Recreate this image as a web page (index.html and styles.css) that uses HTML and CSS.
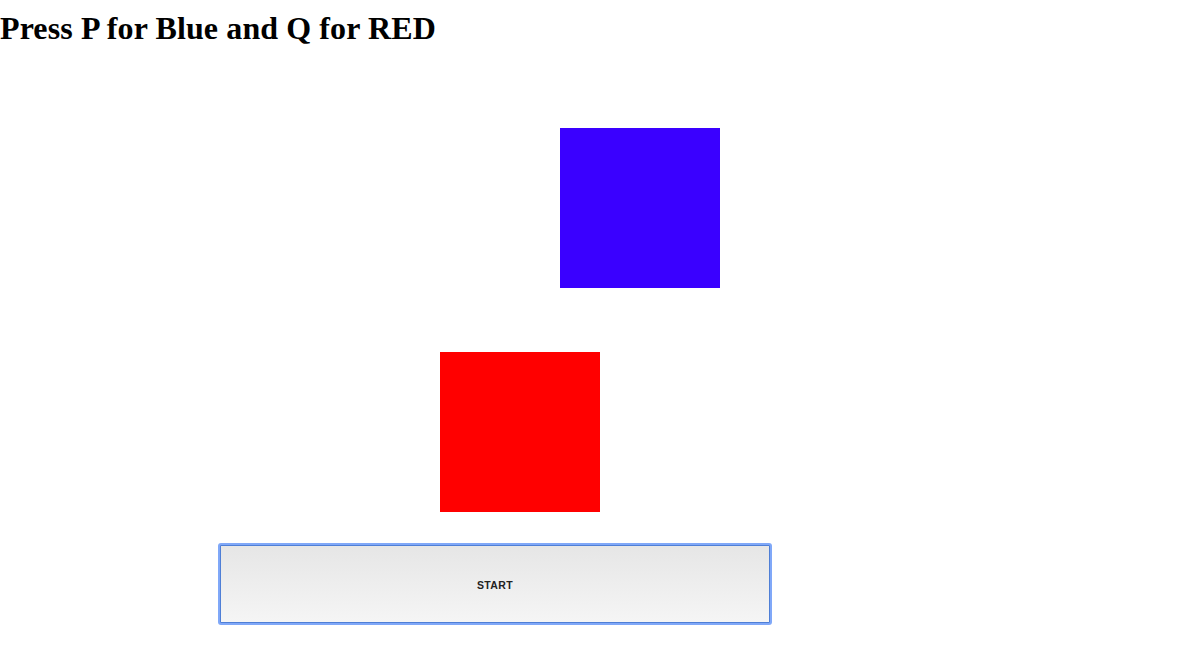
FILE: index.html
```html
<!DOCTYPE html>
<html>
<head>
<meta charset="utf-8">
<link rel="stylesheet" href="styles.css">
</head>
<body>
<h1 class="title">Press P for Blue and Q for RED</h1>
<div class="stage">
  <div class="square blue"></div>
  <div class="square red"></div>
  <div class="ring">
    <button class="start">START</button>
  </div>
</div>
</body>
</html>
```
FILE: styles.css
```css
html, body {
  margin: 0;
  padding: 0;
  background: #ffffff;
}
.title {
  margin: 0;
  padding-top: 10px;
  font-family: "Liberation Serif", "Times New Roman", serif;
  font-size: 32px;
  font-weight: bold;
  line-height: 37px;
  letter-spacing: 0.1px;
  color: #000;
}
.stage {
  display: flex;
  flex-direction: column;
  align-items: flex-start;
}
.square {
  width: 160px;
  height: 160px;
}
.blue {
  background: #3a00ff;
  margin-top: 81px;
  margin-left: 560px;
}
.red {
  background: #ff0000;
  margin-top: 64px;
  margin-left: 440px;
}
.ring {
  margin-top: 31px;
  margin-left: 218px;
  padding: 2px;
  border-radius: 3px;
  background: #80a8f8;
  display: flex;
}
.start {
  -webkit-appearance: none;
  appearance: none;
  display: block;
  margin: 0;
  width: 550px;
  height: 78px;
  box-sizing: border-box;
  border: 1px solid #4f7fd6;
  border-radius: 1px;
  outline: none;
  background: linear-gradient(#e6e6e6, #f5f5f5);
  font-family: "Liberation Sans", Arial, sans-serif;
  font-size: 10.5px;
  font-weight: bold;
  color: #222;
  letter-spacing: 0.4px;
  padding: 2px 0 0 0;
}
```
